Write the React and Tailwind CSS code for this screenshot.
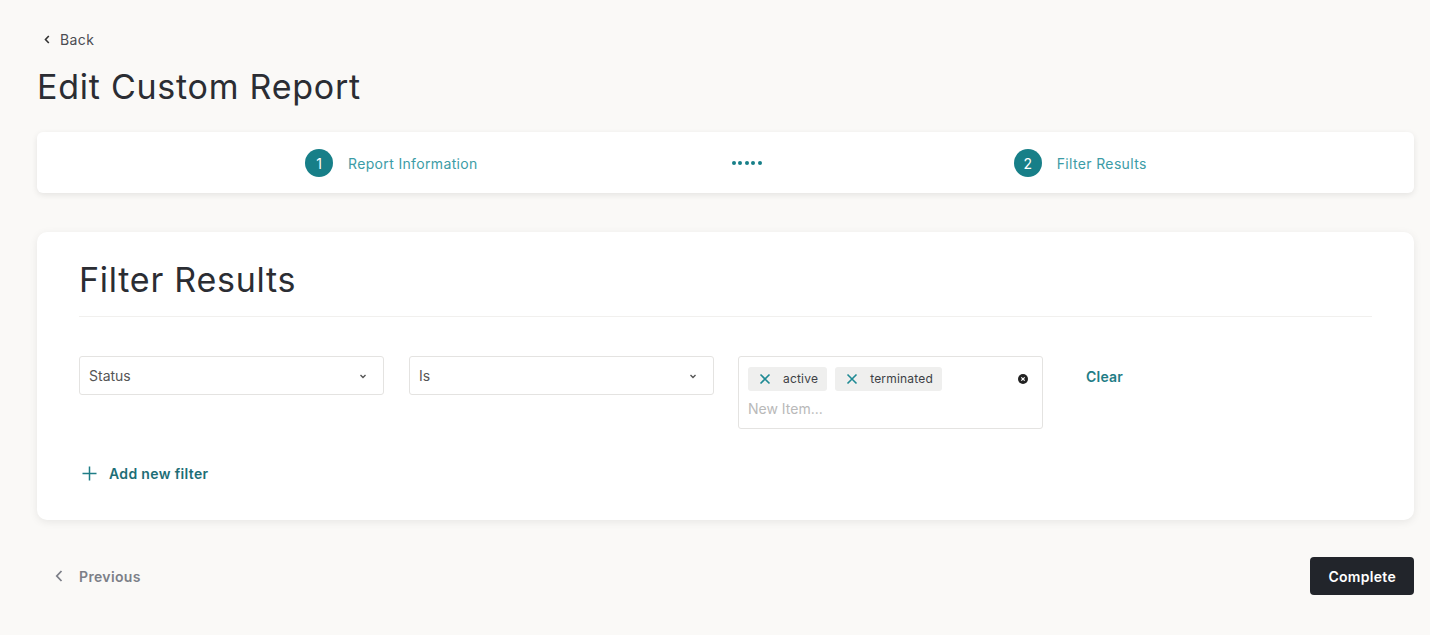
import React from 'react';

const ChevronDown = () => (
  <svg width="10" height="10" viewBox="0 0 10 10" fill="none" stroke="#555" strokeWidth="1.4">
    <path d="M2.5 4l2.5 2.5L7.5 4" />
  </svg>
);

const XIcon = () => (
  <svg width="12" height="12" viewBox="0 0 12 12" fill="none" stroke="#1f8a94" strokeWidth="1.6">
    <path d="M1.5 1.5l9 9M10.5 1.5l-9 9" />
  </svg>
);

const Tag = ({ label }) => (
  <span className="flex items-center gap-[12px] h-[24px] pl-[11px] pr-[9px] rounded-[3px] bg-[#efefee] text-[12px] text-[#3d3f45] tracking-[0.2px]">
    <XIcon />
    {label}
  </span>
);

const Step = ({ n, label }) => (
  <div className="flex items-center gap-[15px]">
    <span className="w-[28px] h-[28px] rounded-full bg-[#177f88] text-white text-[14px] flex items-center justify-center">
      {n}
    </span>
    <span className="text-[14px] text-[#3c9ca6] tracking-[0.35px]">{label}</span>
  </div>
);

const App = () => {
  return (
    <div className="min-h-[635px] bg-[#faf9f7] pl-[37px] pr-[16px] pt-[30px] font-['Inter',sans-serif] text-[#2b2d33]">
      {/* back link */}
      <a href="#!" className="flex items-center gap-[10px] ml-[7px] text-[14px] tracking-[0.4px] text-[#4a4c52] h-[18px]">
        <svg width="6" height="9" viewBox="0 0 6 9" fill="none" stroke="#333" strokeWidth="1.6">
          <path d="M4.8 1L1.5 4.5 4.8 8" />
        </svg>
        Back
      </a>

      <h1 className="mt-[19px] text-[34px] leading-[40px] font-normal tracking-[0.75px]">Edit Custom Report</h1>

      {/* stepper */}
      <div className="mt-[25px] h-[61px] bg-white rounded-[6px] shadow-[0_2px_6px_rgba(0,0,0,0.09)] flex items-center pt-[1px] pl-[268px]">
        <Step n="1" label="Report Information" />
        <div className="ml-[254px] flex gap-[2.5px]">
          {[0, 1, 2, 3, 4].map((i) => (
            <span key={i} className="w-[4px] h-[4px] rounded-full bg-[#177f88]" />
          ))}
        </div>
        <div className="ml-[252px]">
          <Step n="2" label="Filter Results" />
        </div>
      </div>

      {/* filter card */}
      <div className="mt-[39px] bg-white rounded-[10px] shadow-[0_2px_8px_rgba(0,0,0,0.08)] px-[42px] pt-[30px] pb-[36px]">
        <h2 className="text-[34px] leading-[36px] font-normal tracking-[0.75px] pb-[18px] border-b border-[#f1f0ee]">
          Filter Results
        </h2>

        <div className="mt-[39px] flex items-start">
          <div className="w-[305px] h-[39px] border border-[#e4e3e1] rounded-[3px] flex items-center justify-between pl-[9px] pr-[15px] text-[14px] text-[#555]">
            Status
            <ChevronDown />
          </div>
          <div className="ml-[25px] w-[305px] h-[39px] border border-[#e4e3e1] rounded-[3px] flex items-center justify-between pl-[9px] pr-[15px] text-[14px] text-[#555]">
            Is
            <ChevronDown />
          </div>
          <div className="ml-[24px] w-[305px] h-[73px] border border-[#e4e3e1] rounded-[3px] px-[9px] pt-[10px]">
            <div className="flex items-center gap-[8px]">
              <Tag label="active" />
              <Tag label="terminated" />
              <span className="ml-auto mr-[5px] w-[10px] h-[10px] rounded-full bg-[#222] flex items-center justify-center">
                <svg width="6" height="6" viewBox="0 0 6 6" stroke="white" strokeWidth="1.2">
                  <path d="M1.3 1.3l3.4 3.4M4.7 1.3L1.3 4.7" />
                </svg>
              </span>
            </div>
            <div className="mt-[7px] text-[14px] text-[#b9b9b9]">New Item...</div>
          </div>
          <button className="ml-[43px] mt-[10px] text-[14px] font-semibold tracking-[0.2px] text-[#1f7d86]">Clear</button>
        </div>

        <button className="mt-[34px] ml-[3px] flex items-center gap-[12px] text-[14px] font-semibold tracking-[0.35px] text-[#1d6e76]">
          <svg width="15" height="15" viewBox="0 0 15 15" fill="none" stroke="#1f7d86" strokeWidth="1.5">
            <path d="M7.5 0.5v14M0.5 7.5h14" />
          </svg>
          Add new filter
        </button>
      </div>

      {/* footer */}
      <div className="mt-[37px] flex items-center justify-between">
        <button className="ml-[18px] flex items-center gap-[16px] text-[14px] font-semibold tracking-[0.35px] text-[#7c7f88]">
          <svg width="8" height="12" viewBox="0 0 8 12" fill="none" stroke="#7c7f88" strokeWidth="1.8">
            <path d="M6.5 1L1.8 6l4.7 5" />
          </svg>
          Previous
        </button>
        <button className="h-[38px] px-[18px] rounded-[4px] bg-[#22252b] text-white text-[14px] font-semibold tracking-[0.3px]">
          Complete
        </button>
      </div>
    </div>
  );
};

export default App;
